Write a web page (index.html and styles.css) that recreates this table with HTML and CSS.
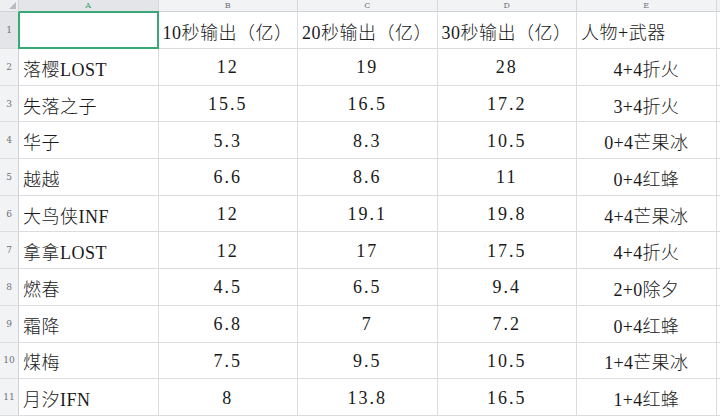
FILE: index.html
```html
<!DOCTYPE html>
<html lang="zh">
<head>
<meta charset="utf-8">
<link rel="stylesheet" href="styles.css">
</head>
<body>
<div class="sheet">
  <div class="corner"><span class="tri"></span></div>
  <div class="ch sel">A</div>
  <div class="ch">B</div>
  <div class="ch">C</div>
  <div class="ch">D</div>
  <div class="ch">E</div>
  <div class="ch last"></div>

  <div class="rh sel">1</div>
  <div class="c active"></div>
  <div class="c">10秒输出（亿）</div>
  <div class="c">20秒输出（亿）</div>
  <div class="c">30秒输出（亿）</div>
  <div class="c">人物+武器</div>
  <div class="c last"></div>

  <div class="rh">2</div><div class="c">落樱LOST</div><div class="c n">12</div><div class="c n">19</div><div class="c n">28</div><div class="c w">4+4折火</div><div class="c last"></div>
  <div class="rh">3</div><div class="c">失落之子</div><div class="c n">15.5</div><div class="c n">16.5</div><div class="c n">17.2</div><div class="c w">3+4折火</div><div class="c last"></div>
  <div class="rh">4</div><div class="c">华子</div><div class="c n">5.3</div><div class="c n">8.3</div><div class="c n">10.5</div><div class="c w">0+4芒果冰</div><div class="c last"></div>
  <div class="rh">5</div><div class="c">越越</div><div class="c n">6.6</div><div class="c n">8.6</div><div class="c n">11</div><div class="c w">0+4红蜂</div><div class="c last"></div>
  <div class="rh">6</div><div class="c">大鸟侠INF</div><div class="c n">12</div><div class="c n">19.1</div><div class="c n">19.8</div><div class="c w">4+4芒果冰</div><div class="c last"></div>
  <div class="rh">7</div><div class="c">拿拿LOST</div><div class="c n">12</div><div class="c n">17</div><div class="c n">17.5</div><div class="c w">4+4折火</div><div class="c last"></div>
  <div class="rh">8</div><div class="c">燃春</div><div class="c n">4.5</div><div class="c n">6.5</div><div class="c n">9.4</div><div class="c w">2+0除夕</div><div class="c last"></div>
  <div class="rh">9</div><div class="c">霜降</div><div class="c n">6.8</div><div class="c n">7</div><div class="c n">7.2</div><div class="c w">0+4红蜂</div><div class="c last"></div>
  <div class="rh">10</div><div class="c">煤梅</div><div class="c n">7.5</div><div class="c n">9.5</div><div class="c n">10.5</div><div class="c w">1+4芒果冰</div><div class="c last"></div>
  <div class="rh">11</div><div class="c">月汐IFN</div><div class="c n">8</div><div class="c n">13.8</div><div class="c n">16.5</div><div class="c w">1+4红蜂</div><div class="c last"></div>
</div>
</body>
</html>
```
FILE: styles.css
```css
* { box-sizing: border-box; }
html, body {
  margin: 0;
  padding: 0;
  background: #ffffff;
  width: 720px;
  height: 420px;
  overflow: hidden;
}
.sheet {
  display: grid;
  grid-template-columns: 19px repeat(5, 139.5px) 1fr;
  grid-template-rows: 12px 37px repeat(10, 36.7px);
  font-family: "Liberation Serif", "Noto Sans CJK SC", serif;
  font-size: 18px;
  font-weight: 300;
  color: #1a1a1a;
}
.corner {
  background: #eeeff1;
  border-right: 1px solid #cfd2d6;
  border-bottom: 1px solid #cfd2d6;
  position: relative;
}
.tri {
  position: absolute;
  right: 2px;
  bottom: 2px;
  width: 0;
  height: 0;
  border-left: 7px solid transparent;
  border-bottom: 7px solid #b8bcc2;
}
.ch {
  background: #f2f3f5;
  border-right: 1px solid #d6d8dc;
  border-bottom: 1px solid #cfd2d6;
  font-family: "DejaVu Serif", serif;
  font-size: 8px;
  font-weight: 400;
  color: #6e7278;
  display: flex;
  align-items: center;
  justify-content: center;
  line-height: 1;
}
.ch.sel {
  background: #e3e5e8;
  color: #3a9d70;
  border-bottom: 1px solid #3aa876;
}
.ch.last { border-right: none; }
.rh {
  background: #f2f3f5;
  border-right: 1px solid #cfd2d6;
  border-bottom: 1px solid #dcdee2;
  font-family: "DejaVu Serif", serif;
  font-size: 9px;
  font-weight: 400;
  color: #6e7278;
  display: flex;
  align-items: center;
  justify-content: center;
}
.rh.sel { background: #e3e5e8; }
.c {
  border-right: 1px solid #dadcdf;
  border-bottom: 1px solid #dadcdf;
  display: flex;
  align-items: center;
  padding: 2px 0 0 4px;
  white-space: nowrap;
  overflow: hidden;
  letter-spacing: 0.5px;
}
.c.n {
  justify-content: center;
  padding-left: 0;
  letter-spacing: 2px;
}
.c.w {
  justify-content: center;
  padding-left: 0;
  letter-spacing: 0.3px;
}
.c.last { border-right: none; }
.c.active {
  border: 2px solid #3aa876;
  margin: -1px 0 0 -1px;
}
```
